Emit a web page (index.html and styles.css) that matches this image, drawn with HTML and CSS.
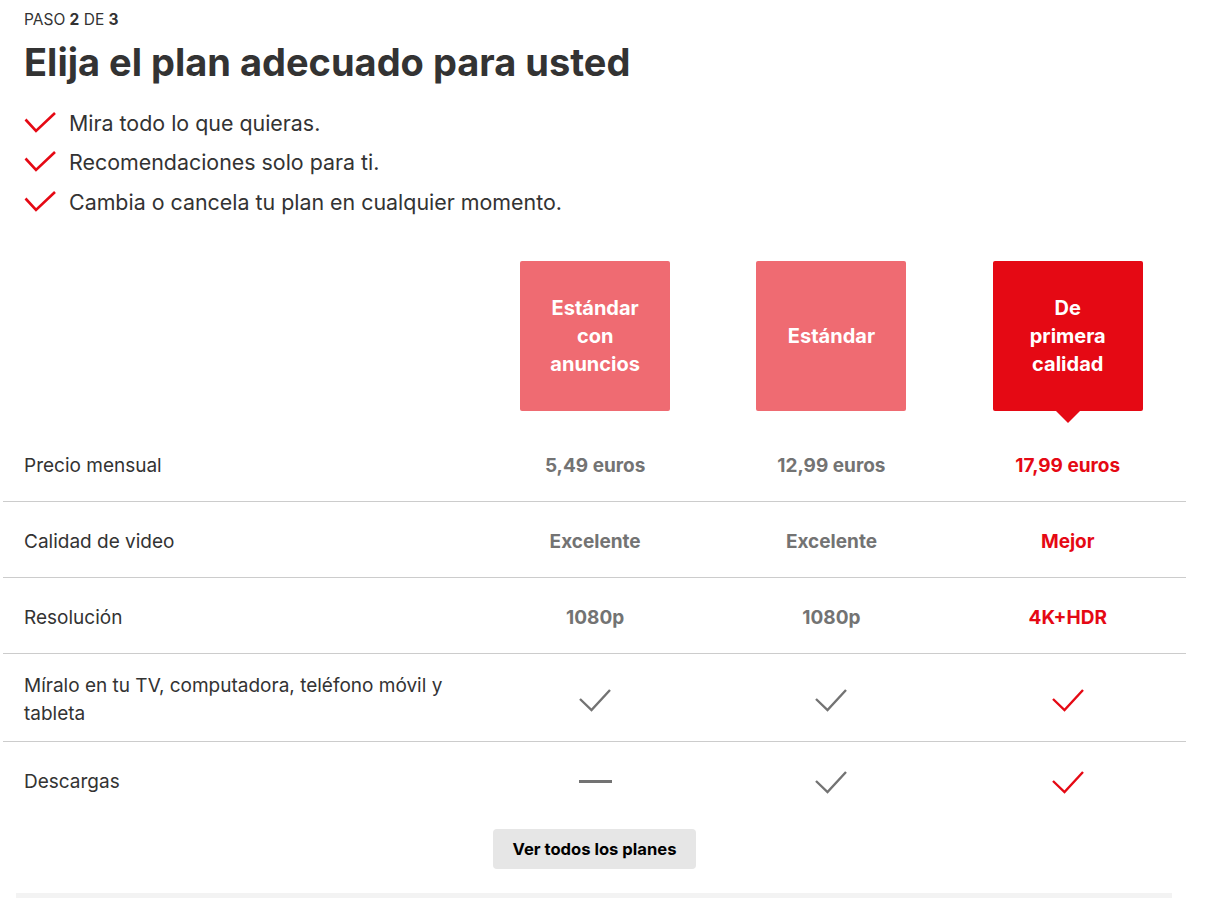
FILE: index.html
```html
<!DOCTYPE html>
<html lang="es">
<head>
<meta charset="utf-8">
<title>Elija el plan adecuado para usted</title>
<link rel="stylesheet" href="styles.css">
</head>
<body>
  <div class="page">
    <div class="header">
      <span class="step">PASO <b>2</b> DE <b>3</b></span>
      <h1>Elija el plan adecuado para usted</h1>
      <ul class="perks">
        <li>
          <svg class="perk-check" viewBox="0 0 32 24"><polyline points="1.5,8.5 12,20 31,2"/></svg>
          Mira todo lo que quieras.
        </li>
        <li>
          <svg class="perk-check" viewBox="0 0 32 24"><polyline points="1.5,8.5 12,20 31,2"/></svg>
          Recomendaciones solo para ti.
        </li>
        <li>
          <svg class="perk-check" viewBox="0 0 32 24"><polyline points="1.5,8.5 12,20 31,2"/></svg>
          Cambia o cancela tu plan en cualquier momento.
        </li>
      </ul>
    </div>

    <div class="plans">
      <div class="plan-row plan-heads">
        <div class="label"></div>
        <div class="cell"><div class="plan-box">Estándar con anuncios</div></div>
        <div class="cell"><div class="plan-box">Estándar</div></div>
        <div class="cell"><div class="plan-box selected">De primera calidad</div></div>
      </div>

      <div class="plan-row">
        <div class="label">Precio mensual</div>
        <div class="cell value">5,49 euros</div>
        <div class="cell value">12,99 euros</div>
        <div class="cell value selected">17,99 euros</div>
      </div>
      <div class="plan-row">
        <div class="label">Calidad de video</div>
        <div class="cell value">Excelente</div>
        <div class="cell value">Excelente</div>
        <div class="cell value selected">Mejor</div>
      </div>
      <div class="plan-row">
        <div class="label">Resolución</div>
        <div class="cell value">1080p</div>
        <div class="cell value">1080p</div>
        <div class="cell value selected">4K+HDR</div>
      </div>
      <div class="plan-row">
        <div class="label">Míralo en tu TV, computadora, teléfono móvil y tableta</div>
        <div class="cell value"><svg class="check" viewBox="0 0 32 24"><polyline points="1,11 12.5,22 31,2"/></svg></div>
        <div class="cell value"><svg class="check" viewBox="0 0 32 24"><polyline points="1,11 12.5,22 31,2"/></svg></div>
        <div class="cell value selected"><svg class="check" viewBox="0 0 32 24"><polyline points="1,11 12.5,22 31,2"/></svg></div>
      </div>
      <div class="plan-row last">
        <div class="label">Descargas</div>
        <div class="cell value"><span class="dash"></span></div>
        <div class="cell value"><svg class="check" viewBox="0 0 32 24"><polyline points="1,11 12.5,22 31,2"/></svg></div>
        <div class="cell value selected"><svg class="check" viewBox="0 0 32 24"><polyline points="1,11 12.5,22 31,2"/></svg></div>
      </div>

      <div class="more">
        <button class="more-btn">Ver todos los planes</button>
      </div>
    </div>
    <div class="footer-bar"></div>
  </div>
</body>
</html>
```

FILE: styles.css
```css
body {
  margin: 0;
  padding: 0;
  font-family: Inter, Roboto, "Liberation Sans", Arial, sans-serif;
  color: #333;
  background: #fff;
}
.page {
  width: 1183px;
  padding-left: 3px;
}
.header {
  padding: 10px 0 0 21px;
}
.step {
  display: block;
  font-size: 15.5px;
  line-height: 19px;
  color: #333;
}
.step b {
  font-weight: 700;
}
h1 {
  margin: 8px 0 0 0;
  font-size: 38px;
  line-height: 50px;
  font-weight: 700;
  color: #333;
}
.perks {
  list-style: none;
  margin: 16px 0 0 0;
  padding: 0;
}
.perks li {
  display: flex;
  align-items: center;
  font-size: 21.4px;
  line-height: 26px;
  height: 39.5px;
  color: #333;
}
.perk-check {
  width: 32px;
  height: 24px;
  margin-right: 13px;
  fill: none;
  stroke: #e50914;
  stroke-width: 2.6;
}

.plans {
  margin-top: 39px;
}
.plan-row {
  display: flex;
  align-items: center;
  padding: 18px 0 13px 0;
  min-height: 44px;
  border-bottom: 1px solid #ccc;
}
.plan-row.plan-heads {
  padding: 0;
  border-bottom: none;
  align-items: flex-start;
  min-height: 0;
}
.plan-row.last {
  border-bottom: none;
}
.label {
  width: 474px;
  box-sizing: border-box;
  padding: 0 30px 0 21px;
  font-size: 19px;
  line-height: 28px;
  color: #333;
}
.cell {
  width: 236.3px;
  display: flex;
  justify-content: center;
  align-items: center;
}
.plan-box {
  position: relative;
  width: 150px;
  height: 150px;
  box-sizing: border-box;
  padding: 0 26px;
  margin-bottom: 15px;
  display: flex;
  align-items: center;
  justify-content: center;
  text-align: center;
  background: #ef6b72;
  color: #fff;
  font-size: 20px;
  line-height: 28px;
  font-weight: 700;
  border-radius: 2px;
}
.plan-box.selected {
  background: #e50914;
}
.plan-box.selected::after {
  content: "";
  position: absolute;
  left: 50%;
  bottom: -12px;
  margin-left: -12px;
  border-left: 12px solid transparent;
  border-right: 12px solid transparent;
  border-top: 12px solid #e50914;
}
.value {
  font-size: 19px;
  line-height: 28px;
  font-weight: 700;
  color: #737373;
}
.value.selected {
  color: #e50914;
}
.check {
  width: 32px;
  height: 24px;
  fill: none;
  stroke: #737373;
  stroke-width: 2.4;
}
.value.selected .check {
  stroke: #e50914;
}
.dash {
  display: block;
  width: 33px;
  height: 3px;
  background: #737373;
}
.more {
  display: flex;
  justify-content: center;
  margin-top: 12px;
}
.more-btn {
  border: none;
  background: #e6e6e6;
  color: #000;
  font-family: Inter, Roboto, "Liberation Sans", Arial, sans-serif;
  font-size: 16.6px;
  font-weight: 700;
  width: 203px;
  height: 40px;
  border-radius: 4px;
}
.footer-bar {
  margin: 24px 0 0 13px;
  width: 1156px;
  height: 10px;
  background: #f3f3f3;
}
```
